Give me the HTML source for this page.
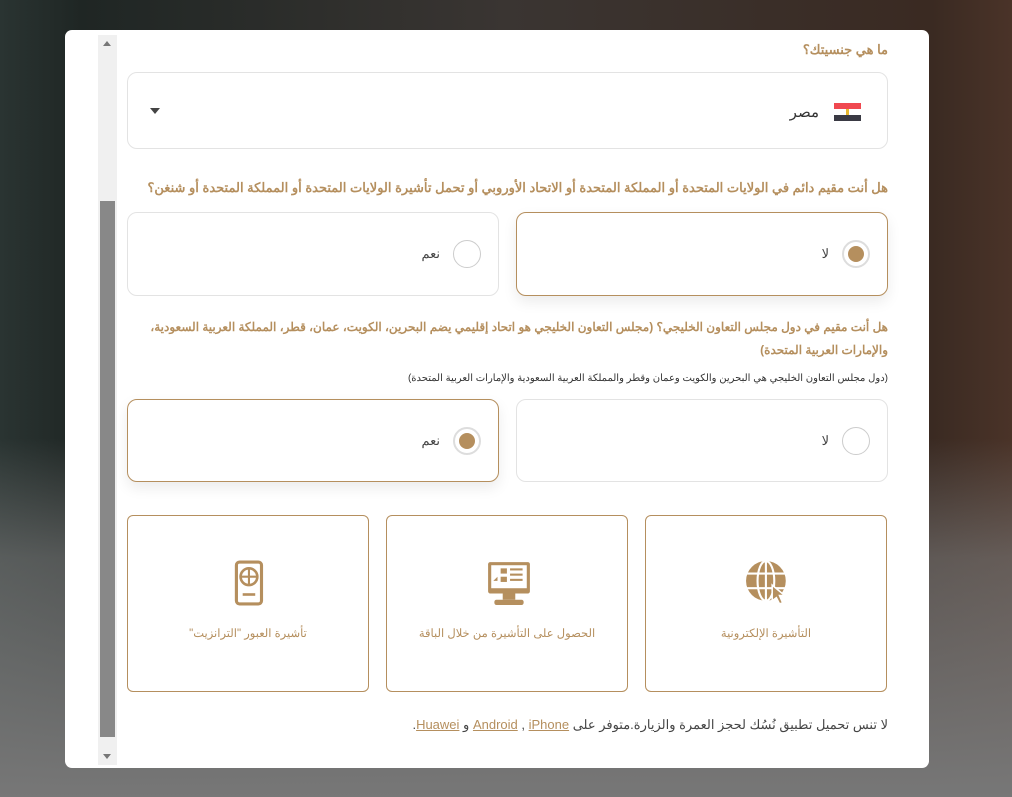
<!DOCTYPE html>
<html><head><meta charset="utf-8"><style>
*{box-sizing:border-box;margin:0;padding:0}
body{width:1012px;height:797px;overflow:hidden;position:relative;font-family:"Liberation Sans","Noto Sans CJK SC",sans-serif;
background:linear-gradient(180deg,rgba(0,0,0,0) 0%,rgba(0,0,0,0) 55%,rgba(120,120,120,.6) 70%,#777 100%),linear-gradient(90deg,#2a3432 0%,#1f2624 8%,#3a3532 50%,#3a2a22 92%,#4a3328 100%);}
.modal{position:absolute;left:65px;top:30px;width:864px;height:738px;background:#fff;border-radius:7px;overflow:hidden}
.sb{position:absolute;left:33px;top:5px;width:19px;height:730px;background:#f0f0f0}
.thumb{position:absolute;left:2px;top:166px;width:15px;height:536px;background:#888}
.arr{position:absolute;left:5px;width:0;height:0;border-left:4px solid transparent;border-right:4px solid transparent}
.abs{position:absolute}
.q{position:absolute;right:41px;color:#b58f5e;font-weight:bold;font-size:13px;direction:rtl;text-align:right;line-height:23px}
.box{position:absolute;border:1px solid #e3e3e3;border-radius:10px;background:#fff}
.sel{border-color:#b58f5e;box-shadow:0 6px 14px rgba(0,0,0,.08)}
.rad{position:absolute;right:17px;top:27px;width:28px;height:28px;border:1px solid #ccc;border-radius:50%;background:#fff}
.rad.on{border:2px solid #ddd}
.rad.on::after{content:"";position:absolute;left:4px;top:4px;width:16px;height:16px;border-radius:50%;background:#b58f5e}
.lbl{position:absolute;right:58px;top:33px;font-size:13px;color:#444}
.tile{position:absolute;top:485px;width:242px;height:177px;border:1px solid #b58f5e;border-radius:6px;background:#fff;text-align:center}
.tile svg{position:absolute;left:99px;top:44px}
.tile span{position:absolute;left:0;right:0;top:110px;font-size:11.5px;color:#b58f5e;direction:rtl}
a{color:#b58f5e;text-decoration:underline}
</style></head><body>
<div class="modal">
 <div class="sb"><div class="arr" style="top:6px;border-bottom:5px solid #777"></div><div class="thumb"></div><div class="arr" style="bottom:6px;border-top:5px solid #777"></div></div>
 <div class="q" style="top:8px">ما هي جنسيتك؟</div>
 <div class="box" style="left:62px;top:42px;width:761px;height:77px">
  <div class="abs" style="right:26px;top:30px;width:27px;height:18px">
   <div style="height:6px;background:#f04850"></div><div style="height:6px;background:#fff;position:relative"><div style="position:absolute;left:12px;top:0;width:3px;height:6px;background:#e8b830"></div></div><div style="height:6px;background:#3a3a44"></div></div>
  <div class="abs" style="right:68px;top:30px;font-size:15px;color:#333">مصر</div>
  <div class="abs" style="left:22px;top:35px;border-left:5px solid transparent;border-right:5px solid transparent;border-top:6px solid #444"></div>
 </div>
 <div class="q" style="top:146px">هل أنت مقيم دائم في الولايات المتحدة أو المملكة المتحدة أو الاتحاد الأوروبي أو تحمل تأشيرة الولايات المتحدة أو المملكة المتحدة أو شنغن؟</div>
 <div class="box sel" style="left:451px;top:182px;width:372px;height:84px"><div class="rad on"></div><div class="lbl">لا</div></div>
 <div class="box" style="left:62px;top:182px;width:372px;height:84px"><div class="rad"></div><div class="lbl">نعم</div></div>
 <div class="q" style="top:286px;width:780px;font-size:12px;white-space:nowrap">هل أنت مقيم في دول مجلس التعاون الخليجي؟ (مجلس التعاون الخليجي هو اتحاد إقليمي يضم البحرين، الكويت، عمان، قطر، المملكة العربية السعودية،<br>والإمارات العربية المتحدة)</div>
 <div class="abs" style="right:41px;top:343px;font-size:10px;color:#333;direction:rtl">(دول مجلس التعاون الخليجي هي البحرين والكويت وعمان وقطر والمملكة العربية السعودية والإمارات العربية المتحدة)</div>
 <div class="box" style="left:451px;top:369px;width:372px;height:83px"><div class="rad"></div><div class="lbl">لا</div></div>
 <div class="box sel" style="left:62px;top:369px;width:372px;height:83px"><div class="rad on"></div><div class="lbl">نعم</div></div>
 <div class="tile" style="left:580px"><svg width="46" height="46" viewBox="0 0 44 44"><circle cx="20" cy="20" r="19" fill="#b58f5e"/><g stroke="#fff" stroke-width="2" fill="none"><ellipse cx="20" cy="20" rx="8" ry="19"/><line x1="20" y1="1" x2="20" y2="39"/><line x1="2" y1="13" x2="38" y2="13"/><line x1="2" y1="27" x2="38" y2="27"/></g><path d="M26 24 L38 34 L33 34 L36 41 L33 42 L30 36 L26 39Z" fill="#b58f5e" stroke="#fff" stroke-width="1.5"/></svg><span>التأشيرة الإلكترونية</span></div>
 <div class="tile" style="left:321px"><svg width="46" height="46" viewBox="0 0 44 44"><rect x="2" y="2" width="40" height="30" rx="2" fill="#b58f5e"/><rect x="5" y="5" width="34" height="22" fill="#fff"/><rect x="14" y="8" width="6" height="5" fill="#b58f5e"/><rect x="14" y="16" width="6" height="5" fill="#b58f5e"/><g stroke="#b58f5e" stroke-width="2"><line x1="23" y1="9" x2="35" y2="9"/><line x1="23" y1="14" x2="35" y2="14"/><line x1="23" y1="19" x2="35" y2="19"/></g><path d="M7 20 L11 16 L11 20Z" fill="#b58f5e"/><rect x="16" y="32" width="12" height="6" fill="#b58f5e"/><rect x="8" y="38" width="28" height="5" rx="2" fill="#b58f5e"/></svg><span>الحصول على التأشيرة من خلال الباقة</span></div>
 <div class="tile" style="left:62px"><svg width="46" height="46" viewBox="0 0 44 44"><rect x="9" y="2" width="24" height="40" rx="3" fill="none" stroke="#b58f5e" stroke-width="3"/><circle cx="21" cy="16" r="8" fill="none" stroke="#b58f5e" stroke-width="2.5"/><line x1="21" y1="8" x2="21" y2="24" stroke="#b58f5e" stroke-width="2"/><line x1="13" y1="16" x2="29" y2="16" stroke="#b58f5e" stroke-width="2"/><line x1="15" y1="33" x2="27" y2="33" stroke="#b58f5e" stroke-width="2.5"/></svg><span>تأشيرة العبور "الترانزيت"</span></div>
 <div class="abs" style="right:41px;top:687px;font-size:13px;color:#444;direction:rtl">لا تنس تحميل تطبيق نُسُك لحجز العمرة والزيارة.متوفر على <a>Android</a> , <a>iPhone</a> و <a>Huawei</a>.</div>
</div>
</body></html>
